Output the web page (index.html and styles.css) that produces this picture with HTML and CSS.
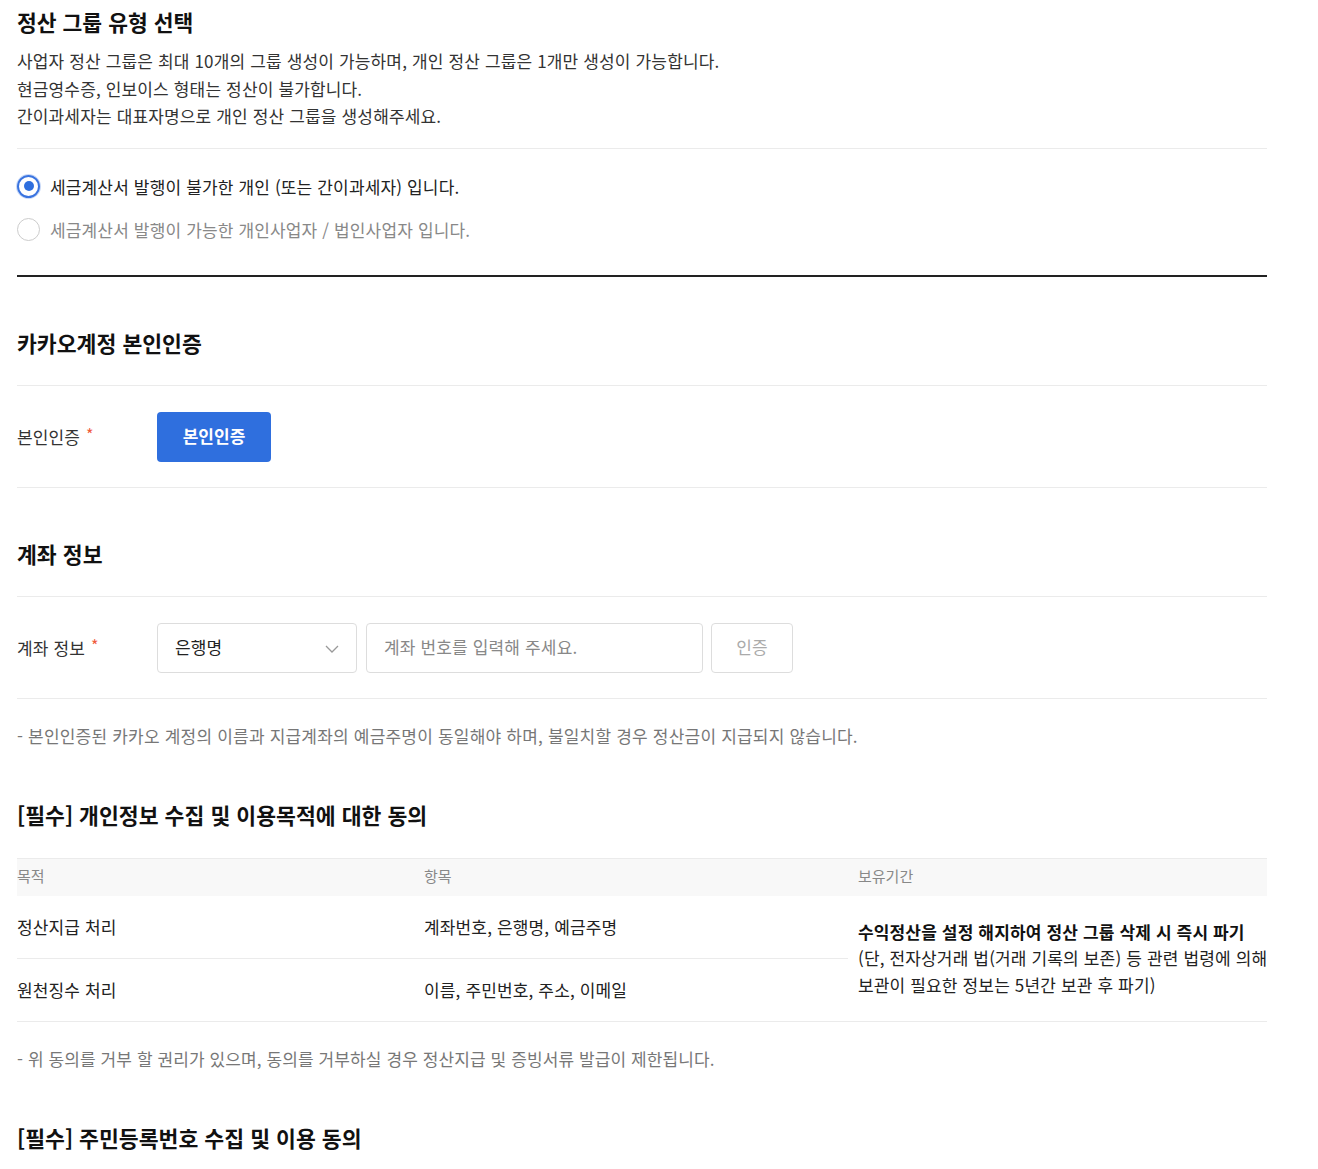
FILE: index.html
```html
<!DOCTYPE html>
<html lang="ko">
<head>
<meta charset="utf-8">
<title>정산 그룹</title>
<link rel="stylesheet" href="styles.css">
</head>
<body>
<div class="page">
  <section class="group-type">
    <h2 class="title">정산 그룹 유형 선택</h2>
    <p class="desc">사업자 정산 그룹은 최대 10개의 그룹 생성이 가능하며, 개인 정산 그룹은 1개만 생성이 가능합니다.<br>현금영수증, 인보이스 형태는 정산이 불가합니다.<br>간이과세자는 대표자명으로 개인 정산 그룹을 생성해주세요.</p>
    <div class="radios">
      <label class="radio checked"><span class="circle"></span><span>세금계산서 발행이 불가한 개인 (또는 간이과세자) 입니다.</span></label>
      <label class="radio"><span class="circle"></span><span>세금계산서 발행이 가능한 개인사업자 / 법인사업자 입니다.</span></label>
    </div>
  </section>

  <section class="block">
    <h3 class="block-title">카카오계정 본인인증</h3>
    <div class="row">
      <div class="label">본인인증 <span class="star">*</span></div>
      <button class="btn-primary">본인인증</button>
    </div>
  </section>

  <section class="block">
    <h3 class="block-title">계좌 정보</h3>
    <div class="row">
      <div class="label">계좌 정보 <span class="star">*</span></div>
      <div class="select"><span>은행명</span>
        <svg class="chev" width="14" height="8" viewBox="0 0 14 8"><path d="M1 1l6 6 6-6" fill="none" stroke="#999" stroke-width="1.3"/></svg>
      </div>
      <div class="input">계좌 번호를 입력해 주세요.</div>
      <button class="btn-line">인증</button>
    </div>
    <p class="note">- 본인인증된 카카오 계정의 이름과 지급계좌의 예금주명이 동일해야 하며, 불일치할 경우 정산금이 지급되지 않습니다.</p>
  </section>

  <section class="agree">
    <h3 class="agree-title">[필수] 개인정보 수집 및 이용목적에 대한 동의</h3>
    <table class="tbl">
      <thead>
        <tr><th class="c1">목적</th><th class="c2">항목</th><th class="c3">보유기간</th></tr>
      </thead>
      <tbody>
        <tr class="r1"><td class="c1">정산지급 처리</td><td class="c2">계좌번호, 은행명, 예금주명</td>
          <td class="c3" rowspan="2"><strong class="ln">수익정산을 설정 해지하여 정산 그룹 삭제 시 즉시 파기</strong><span class="ln">(단, 전자상거래 법(거래 기록의 보존) 등 관련 법령에 의해</span><span class="ln">보관이 필요한 정보는 5년간 보관 후 파기)</span></td></tr>
        <tr class="r2"><td class="c1">원천징수 처리</td><td class="c2">이름, 주민번호, 주소, 이메일</td></tr>
      </tbody>
    </table>
    <p class="note">- 위 동의를 거부 할 권리가 있으며, 동의를 거부하실 경우 정산지급 및 증빙서류 발급이 제한됩니다.</p>
  </section>

  <section class="agree">
    <h3 class="agree-title">[필수] 주민등록번호 수집 및 이용 동의</h3>
  </section>
</div>
</body>
</html>
```

FILE: styles.css
```css
* { box-sizing: border-box; }
html, body { margin: 0; padding: 0; background: #fff; }
body {
  font-family: "Noto Sans CJK KR", "Noto Sans", sans-serif;
  color: #222;
  font-size: 17px;
  letter-spacing: 0.15px;
}
.page { width: 1284px; padding: 0 17px; }
.page > section { width: 1250px; }

.title { margin: 0; padding-top: 7px; padding-bottom: 1px; font-size: 21.5px; line-height: 30px; font-weight: 700; color: #111; letter-spacing: 0; }
.desc { margin: 9px 0 0; font-size: 17px; line-height: 27.5px; color: #333; padding-bottom: 18px; border-bottom: 1px solid #ebebeb; }
.radios { padding: 16px 0 24px; border-bottom: 2px solid #222; }
.radio { display: flex; align-items: center; height: 43px; gap: 10px; font-size: 17px; color: #888; }
.radio.checked { color: #222; }
.circle { width: 23px; height: 23px; border-radius: 50%; border: 1px solid #ccc; position: relative; flex: none; }
.radio.checked .circle { border: 2px solid #3a74e0; box-shadow: 0 0 0 1px #c9d9f7; }
.radio.checked .circle::after { content: ""; position: absolute; left: 4.5px; top: 4.5px; width: 10px; height: 10px; border-radius: 50%; background: #2f6fde; }

.block-title { margin: 0; padding: 51px 0 27px; font-size: 21.6px; line-height: 30px; font-weight: 700; color: #111; letter-spacing: 0; border-bottom: 1px solid #ebebeb; }
.row { display: flex; align-items: center; padding: 26px 0 25px; border-bottom: 1px solid #ebebeb; }
.label { width: 140px; flex: none; font-size: 17px; color: #333; }
.star { color: #ef5a3c; font-size: 16px; position: relative; top: -3px; margin-left: 1px; }
.btn-primary { width: 114px; height: 50px; border: 0; border-radius: 4px; background: #2f6fde; color: #fff; font: 700 17px "Noto Sans CJK KR", sans-serif; padding: 0 0 2px; }
.select { width: 200px; height: 50px; border: 1px solid #ddd; border-radius: 4px; display: flex; align-items: center; justify-content: space-between; padding: 0 17px 2px 17px; color: #222; }
.chev { margin-top: 4px; }
.input { width: 337px; height: 50px; margin-left: 9px; border: 1px solid #ddd; border-radius: 4px; display: flex; align-items: center; padding: 0 17px 2px; color: #888; }
.btn-line { width: 82px; height: 50px; margin-left: 8px; border: 1px solid #ddd; border-radius: 4px; background: #fff; color: #aaa; font: 400 17px "Noto Sans CJK KR", sans-serif; padding: 0 0 2px; }
.note { margin: 25px 0 0; font-size: 17px; line-height: 24px; color: #777; letter-spacing: 0.2px; }
.agree .note { letter-spacing: 0.1px; }

.agree-title { margin: 0; padding-top: 52px; padding-bottom: 2px; font-size: 21.6px; line-height: 30px; font-weight: 700; color: #111; letter-spacing: 0; }
.tbl { margin-top: 26px; width: 1250px; border-collapse: collapse; table-layout: fixed; }
.tbl th { height: 38px; background: #f8f8f8; border-top: 1px solid #ebebeb; text-align: left; font-weight: 400; font-size: 15px; color: #888; padding: 0 0 3px; letter-spacing: 0; }
.tbl td { padding: 0; font-size: 17px; color: #222; vertical-align: middle; }
.tbl .c1 { width: 407px; }
.tbl .c2 { width: 424px; }
.tbl .c3 { width: 419px; padding-left: 10px; }
.tbl tr.r1 td { height: 62px; border-bottom: 1px solid #ebebeb; }
.tbl tr.r2 td { height: 63px; border-bottom: 1px solid #ebebeb; }
.tbl td.c3 { padding-top: 0; }
.ln { display: block; white-space: nowrap; line-height: 26.5px; }
strong.ln { font-weight: 700; color: #111; }
```
